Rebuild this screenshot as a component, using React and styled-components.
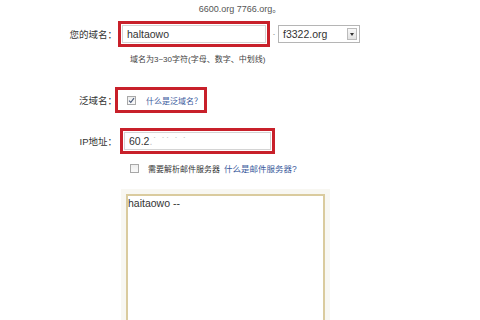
import styled, { createGlobalStyle } from "styled-components";

const GlobalStyle = createGlobalStyle`
  html, body {
    margin: 0;
    padding: 0;
    background: #fff;
    overflow: hidden;
  }
  body {
    font-family: "Liberation Sans", "Noto Sans CJK SC", sans-serif;
    color: #333;
  }
`;

const Page = styled.div`
  width: 480px;
  height: 320px;
  overflow: hidden;
`;

const Notice = styled.div`
  margin: -12px auto 0;
  width: 460px;
  font-size: 9px;
  line-height: 14px;
  color: #555;
  text-align: center;
  white-space: nowrap;
  overflow: hidden;
`;

const Row = styled.div`
  display: grid;
  grid-template-columns: 117px auto;
  align-items: ${(p) => p.$align || "center"};
  margin-top: ${(p) => p.$top || 0}px;
`;

const Label = styled.span`
  font-size: 9.5px;
  color: #333;
  text-align: right;
  white-space: nowrap;
  align-self: ${(p) => p.$self || "center"};
  margin-bottom: ${(p) => p.$bottom || 0}px;
`;

const Field = styled.div`
  display: flex;
  align-items: center;
  gap: ${(p) => p.$gap || 0}px;
  margin-left: ${(p) => p.$left || 0}px;
`;

const RedBox = styled.div`
  box-sizing: border-box;
  width: ${(p) => p.$w}px;
  height: 26px;
  border: 3px solid #c8202a;
  display: flex;
  align-items: center;
  padding: ${(p) => p.$pad || "1px"};
  gap: 10px;
`;

const TextInput = styled.div`
  box-sizing: border-box;
  flex: 1;
  height: 100%;
  border: 1px solid #d4d4d4;
  background: #fff;
  padding-left: 4px;
  display: flex;
  align-items: center;
  font-size: 10.5px;
  color: #333;
`;

const Faint = styled.span`
  color: #c4c4c4;
  letter-spacing: 1px;
`;

const Dot = styled.span`
  width: 8px;
  text-align: center;
  font-size: 9px;
  color: #888;
`;

const Select = styled.div`
  box-sizing: border-box;
  width: 82px;
  height: 18px;
  border: 1px solid #b5b5b5;
  display: flex;
  align-items: center;
  justify-content: space-between;
  padding: 0 2px 0 4px;
  font-size: 10.5px;
  color: #333;
  background: #fff;
`;

const Arrow = styled.span`
  box-sizing: border-box;
  width: 10px;
  height: 12px;
  border: 1px solid #bbb;
  background: linear-gradient(#f8f8f8, #e2e2e2);
  display: flex;
  align-items: center;
  justify-content: center;
  &::after {
    content: "";
    border-left: 2px solid transparent;
    border-right: 2px solid transparent;
    border-top: 3px solid #333;
  }
`;

const Hint = styled.div`
  margin-top: ${(p) => p.$top}px;
  padding-left: 130px;
  font-size: 8px;
  line-height: 12px;
  color: #444;
`;

const Check = styled.span`
  box-sizing: border-box;
  width: 9px;
  height: 9px;
  border: 1px solid #a8a8a8;
  background: linear-gradient(#eeeeee, #fafafa);
  display: inline-flex;
  align-items: center;
  justify-content: center;
  flex-shrink: 0;
`;

const Link = styled.a`
  font-size: ${(p) => p.$size || 8}px;
  color: #3a5a9c;
  text-decoration: none;
  white-space: nowrap;
  margin-left: ${(p) => p.$left || 0}px;
`;

const Text = styled.span`
  font-size: 8px;
  color: #333;
  white-space: nowrap;
  margin-left: 9px;
`;

const TextArea = styled.div`
  box-sizing: border-box;
  width: 199px;
  height: 140px;
  border: 2px solid #dacb9e;
  box-shadow: 0 0 0 5px #f8f7f2;
  padding: 1px 0 0 0;
  font-size: 10.5px;
  line-height: 13px;
  color: #333;
  background: #fff;
`;

function Tick() {
  return (
    <svg width="7" height="7" viewBox="0 0 7 7">
      <path d="M1 3.6 L2.8 5.4 L6 1.2" fill="none" stroke="#4a5a7a" strokeWidth="1.1" />
    </svg>
  );
}

export default function App() {
  return (
    <>
      <GlobalStyle />
      <Page>
        <Notice>
          温馨提示：可供免费注册的域名后缀有 f3322.net、3322.org、8800.org、8866.org、eicp.net、
          <br />
          6600.org 7766.org。
        </Notice>

        <Row $top={5}>
          <Label>您的域名：</Label>
          <Field $left={1}>
            <RedBox $w={152}>
              <TextInput>haltaowo</TextInput>
            </RedBox>
            <Dot>·</Dot>
            <Select>
              f3322.org
              <Arrow />
            </Select>
          </Field>
        </Row>
        <Hint $top={7}>域名为3~30字符(字母、数字、中划线)</Hint>

        <Row $top={21}>
          <Label>泛域名：</Label>
          <Field $left={-2}>
            <RedBox $w={92} $pad="0 0 0 9px">
              <Check>
                <Tick />
              </Check>
              <Link $size={8}>什么是泛域名？</Link>
            </RedBox>
          </Field>
        </Row>

        <Row $top={15}>
          <Label>IP地址：</Label>
          <Field $left={3}>
            <RedBox $w={155}>
              <TextInput>
                60.2<Faint>.˙ ˙˙ ˙ ˙</Faint>
              </TextInput>
            </RedBox>
          </Field>
        </Row>

        <Row $top={8}>
          <span />
          <Field $left={13}>
            <Check />
            <Text>需要解析邮件服务器</Text>
            <Link $size={8.5} $left={4}>
              什么是邮件服务器?
            </Link>
          </Field>
        </Row>

        <Row $top={20} $align="end">
          <Label $self="end" $bottom={1}>
            备　注：
          </Label>
          <Field $left={9}>
            <TextArea>haitaowo --</TextArea>
          </Field>
        </Row>
      </Page>
    </>
  );
}
